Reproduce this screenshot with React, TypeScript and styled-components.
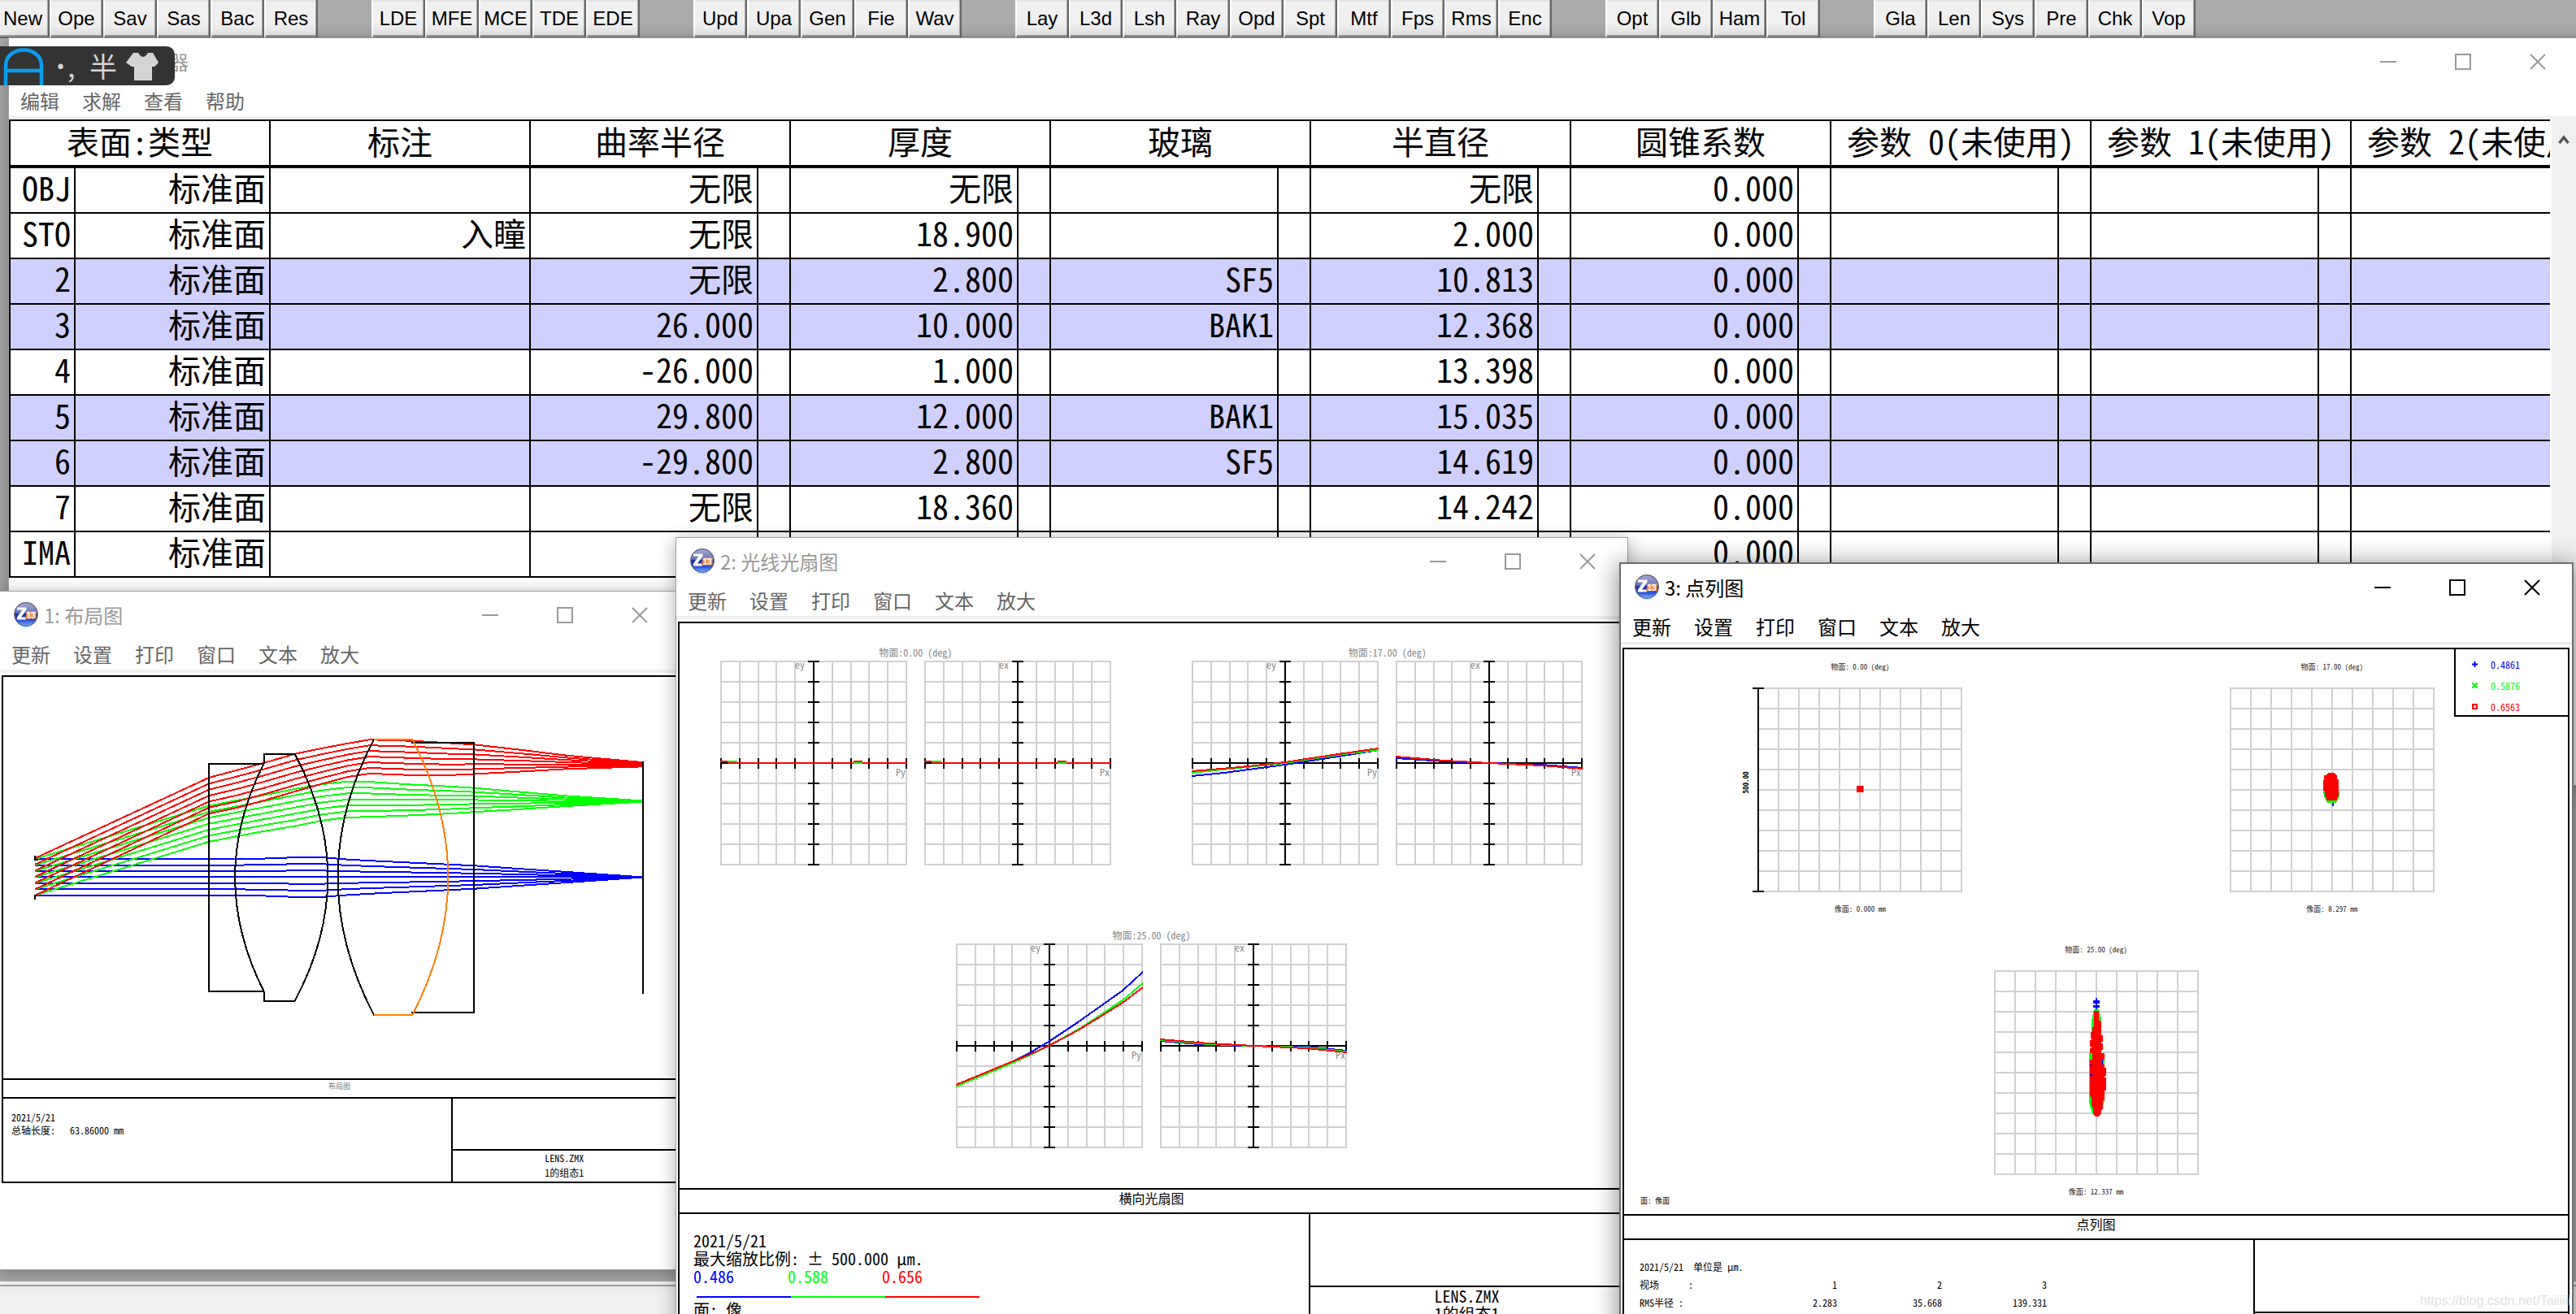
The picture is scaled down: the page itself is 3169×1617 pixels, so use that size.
import React from "react";
import styled, { createGlobalStyle } from "styled-components";

const UI_FONT = '"Noto Sans CJK SC", "Noto Sans", sans-serif';
const GRID_FONT = '"Noto Sans Mono CJK SC", "Noto Sans CJK SC", monospace';

const GlobalStyle = createGlobalStyle`
  *, *::before, *::after { box-sizing: border-box; }
  html, body { margin: 0; padding: 0; overflow: hidden; background: #ababab; }
  button { font: inherit; color: inherit; border: 0; background: none; padding: 0; margin: 0; }
`;

const Desktop = styled.div`
  position: relative;
  display: flex;
  flex-direction: column;
  height: 100vh;
  overflow: hidden;
  background: #ababab;
  font-family: ${UI_FONT};
`;

/* ---------- toolbar ---------- */

const Toolbar = styled.div`
  display: flex;
  flex: none;
  gap: 66px;
  height: 47px;
  margin-left: -5px;
  border-bottom: 2px solid #8a8a8a;
`;

const ToolGroup = styled.div`
  display: flex;
  height: 47px;
`;

const ToolButton = styled.button`
  width: 66px;
  height: 47px;
  background: #f0f0f0;
  border-style: solid;
  border-width: 0 2px 2px 2px;
  border-color: #fff #696969 #696969 #fff;
  box-shadow: inset -1px -2px 0 #a8a8a8, inset 0 2px 0 #e3e3e3;
  font-family: "Liberation Sans", Arial, sans-serif;
  font-size: 24px;
  color: #000;
`;

const Workspace = styled.main`
  flex: 1;
`;

const StatusBar = styled.footer`
  flex: none;
  height: 40px;
  background: #f0f0f0;
  border-top: 4px solid #f8f8f8;
  box-shadow: inset 0 2px 0 #a0a0a0;
`;

/* ---------- windows ---------- */

interface WinProps {
  $active?: boolean;
  $x: number;
  $y: number;
  $z: number;
}

const Win = styled.section<WinProps>`
  position: absolute;
  left: ${(p) => p.$x}px;
  top: ${(p) => p.$y}px;
  z-index: ${(p) => p.$z};
  display: flex;
  flex-direction: column;
  background: #fff;
  color: ${(p) => (p.$active ? "#000" : "#666")};
  box-shadow: ${(p) =>
    p.$active
      ? "0 0 0 2px #6e6e6e, 0 4px 28px 4px rgba(0,0,0,.45)"
      : "0 0 0 1px #a0a0a0, 0 4px 20px 2px rgba(0,0,0,.3)"};
`;

const EditorWin = styled(Win)`
  right: -2px;
  height: 919px;
`;
const LayoutWin = styled(Win)`
  width: 836px;
  height: 834px;
`;
const FanWin = styled(Win)`
  width: 1170px;
  bottom: -50px;
`;
const SpotWin = styled(Win)`
  right: 5px;
  bottom: -50px;
`;

const TitleBar = styled.header<{ $active?: boolean }>`
  display: flex;
  align-items: center;
  flex: none;
  height: 58px;
  padding: 0 3px 0 17px;
  color: ${(p) => (p.$active ? "#000" : "#999")};
`;

const Title = styled.h2`
  flex: 1;
  margin: 0 0 0 7px;
  font-size: 24px;
  line-height: 32px;
  font-weight: 400;
`;

const CtlButton = styled.button`
  display: grid;
  place-items: center;
  width: 92px;
  height: 58px;
`;

const MenuBar = styled.nav`
  display: flex;
  align-items: center;
  flex: none;
  gap: 28px;
  height: 38px;
  padding-left: 14px;
`;

const MenuItem = styled.button`
  font-size: 24px;
  line-height: 32px;
`;

const Rule = styled.div`
  flex: none;
  height: 4px;
  background: #f0f0f0;
`;

function Controls() {
  return (
    <>
      <CtlButton type="button" aria-label="最小化">
        <svg width="20" height="20" viewBox="0 0 20 20"><path d="M0 10H20" stroke="currentColor" strokeWidth="2" /></svg>
      </CtlButton>
      <CtlButton type="button" aria-label="最大化">
        <svg width="20" height="20" viewBox="0 0 20 20"><rect x="1" y="1" width="18" height="18" fill="none" stroke="currentColor" strokeWidth="2" /></svg>
      </CtlButton>
      <CtlButton type="button" aria-label="关闭">
        <svg width="20" height="20" viewBox="0 0 20 20"><path d="M1 1L19 19M19 1L1 19" stroke="currentColor" strokeWidth="2" /></svg>
      </CtlButton>
    </>
  );
}

function Logo({ id }: { id: string }) {
  return (
    <svg width="30" height="32" viewBox="0 0 30 32" aria-hidden="true">
      <defs>
        <linearGradient id={id} x1="0" y1="0" x2="0" y2="1">
          <stop offset="0" stopColor="#a9acd6" />
          <stop offset="0.42" stopColor="#6d74b8" />
          <stop offset="0.5" stopColor="#1c2f9e" />
          <stop offset="0.75" stopColor="#2c50d8" />
          <stop offset="1" stopColor="#7db4ff" />
        </linearGradient>
        <linearGradient id={id + "o"} x1="0" y1="0" x2="0" y2="1">
          <stop offset="0" stopColor="#f9b27a" />
          <stop offset="1" stopColor="#ee6d1c" />
        </linearGradient>
      </defs>
      <ellipse cx="15" cy="30" rx="7" ry="1.5" fill="#bfeaff" />
      <circle cx="15" cy="15" r="14.3" fill={`url(#${id})`} stroke="#5a6078" strokeWidth="1.2" />
      <path d="M4 6.5H15.500V9.500L9 18.500H15V21.500H4V18.500L10.500 9.500H4Z" fill="#fff" />
      <path d="M16 11.500H27.500V20.500H14Z" fill={`url(#${id}o)`} />
      <text x="15.500" y="19.500" fontSize="10" fontWeight="700" fill="#fff" fontFamily="Liberation Sans">13</text>
    </svg>
  );
}

function WindowHead({ id, title, active }: { id: string; title: string; active?: boolean }) {
  return (
    <>
      <TitleBar $active={active}>
        <Logo id={id} />
        <Title>{title}</Title>
        <Controls />
      </TitleBar>
      <MenuBar>
        {["更新", "设置", "打印", "窗口", "文本", "放大"].map((m) => (
          <MenuItem key={m} type="button">{m}</MenuItem>
        ))}
      </MenuBar>
      <Rule />
    </>
  );
}

/* ---------- lens data editor ---------- */

const EditorBody = styled.div`
  display: flex;
  flex: 1;
  min-height: 0;
  background: #f0f0f0;
`;

const SheetArea = styled.div`
  flex: 1;
  min-width: 0;
  overflow: hidden;
  background: #fff;
`;

const ScrollTrack = styled.div`
  flex: none;
  width: 34px;
  padding: 12px 0 0 8px;
  border-left: 2px solid #fff;
  background: #f0f0f0;
`;

const Sheet = styled.table`
  table-layout: fixed;
  width: 3202px;
  border-collapse: separate;
  border-spacing: 0;
  border-left: 2px solid #000;
  font-family: ${GRID_FONT};
  font-size: 40px;
  font-weight: 300;
  line-height: 44px;
  color: #000;
`;

const Th = styled.th`
  height: 60px;
  padding: 0 0 6px;
  border: solid #000;
  border-width: 2px 2px 4px 0;
  font-weight: 300;
  white-space: nowrap;
`;

const Td = styled.td`
  height: 56px;
  padding: 0 4px 8px 0;
  border: solid #000;
  border-width: 0 2px 2px 0;
  text-align: right;
  white-space: nowrap;
`;

const Tr = styled.tr<{ $tint?: boolean }>`
  background: ${(p) => (p.$tint ? "#d0d0ff" : "#fff")};
`;

interface Surface {
  id: string;
  note?: string;
  radius: string;
  thick: string;
  glass?: string;
  semi: string;
}

const surfaces: Surface[] = [
  { id: "OBJ", radius: "无限", thick: "无限", semi: "无限" },
  { id: "STO", note: "入瞳", radius: "无限", thick: "18.900", semi: "2.000" },
  { id: "2", radius: "无限", thick: "2.800", glass: "SF5", semi: "10.813" },
  { id: "3", radius: "26.000", thick: "10.000", glass: "BAK1", semi: "12.368" },
  { id: "4", radius: "-26.000", thick: "1.000", semi: "13.398" },
  { id: "5", radius: "29.800", thick: "12.000", glass: "BAK1", semi: "15.035" },
  { id: "6", radius: "-29.800", thick: "2.800", glass: "SF5", semi: "14.619" },
  { id: "7", radius: "无限", thick: "18.360", semi: "14.242" },
  { id: "IMA", radius: "无限", thick: "", semi: "" },
];

const pairedHeads = ["曲率半径", "厚度", "玻璃", "半直径", "圆锥系数", "参数 0(未使用)", "参数 1(未使用)", "参数 2(未使用)"];

function SurfaceSheet() {
  return (
    <Sheet>
      <colgroup>
        <col style={{ width: 80 }} />
        <col style={{ width: 240 }} />
        <col style={{ width: 320 }} />
        {pairedHeads.map((h) => (
          <React.Fragment key={h}>
            <col style={{ width: 280 }} />
            <col style={{ width: 40 }} />
          </React.Fragment>
        ))}
      </colgroup>
      <thead>
        <tr>
          <Th colSpan={2}>表面:类型</Th>
          <Th>标注</Th>
          {pairedHeads.map((h) => <Th key={h} colSpan={2}>{h}</Th>)}
        </tr>
      </thead>
      <tbody>
        {surfaces.map((s) => (
          <Tr key={s.id} $tint={!!s.glass}>
            <Td>{s.id}</Td>
            <Td>标准面</Td>
            <Td>{s.note}</Td>
            {[s.radius, s.thick, s.glass, s.semi, "0.000", "", "", ""].map((v, i) => (
              <React.Fragment key={i}>
                <Td>{v}</Td>
                <Td />
              </React.Fragment>
            ))}
          </Tr>
        ))}
      </tbody>
    </Sheet>
  );
}

const EditorTitle = styled(Title)`
  margin-left: 180px;
`;

const ImeBadge = styled.aside`
  position: absolute;
  left: 0;
  top: 57px;
  z-index: 2;
  display: flex;
  align-items: center;
  width: 215px;
  height: 48px;
  border-radius: 0 10px 10px 0;
  background: #333;
  color: #d4d4d4;
  font-size: 34px;
  line-height: 48px;
`;

const ImeMode = styled.span`
  width: 44px;
  margin-left: 8px;
`;

const ImeWidth = styled.span`
  width: 44px;
`;

/* ---------- plot frames ---------- */

const Frame = styled.div`
  display: flex;
  flex-direction: column;
  flex: none;
  margin: 3px 3px 0 2px;
  border: 2px solid #000;
  color: #000;
  font-family: ${GRID_FONT};
`;

const FrameTitle = styled.div<{ $small?: boolean }>`
  flex: none;
  height: ${(p) => (p.$small ? 25 : 32)}px;
  border: solid #000;
  border-width: 2px 0;
  text-align: center;
  font-size: ${(p) => (p.$small ? 9 : 16)}px;
  line-height: ${(p) => (p.$small ? 15 : 20)}px;
  color: ${(p) => (p.$small ? "#777" : "#000")};
`;

const FrameFoot = styled.div<{ $h: number }>`
  display: grid;
  grid-template-columns: 2fr 1fr;
  height: ${(p) => p.$h}px;
  overflow: hidden;
`;

const Notes = styled.div<{ $size: number; $line: number; $top: number; $left: number }>`
  padding: ${(p) => p.$top}px 0 0 ${(p) => p.$left}px;
  font-size: ${(p) => p.$size}px;
  line-height: ${(p) => p.$line}px;
  white-space: pre;
  overflow: hidden;
`;

const FileCol = styled.div<{ $split: number; $size: number; $line: number }>`
  display: grid;
  grid-template-rows: ${(p) => p.$split}px 1fr;
  border-left: 2px solid #000;
  font-size: ${(p) => p.$size}px;
  line-height: ${(p) => p.$line}px;
  text-align: center;
`;

const FileName = styled.div`
  border-top: 2px solid #000;
`;

/* ---------- layout drawing ---------- */

type Pt = [number, number];

const LAYOUT_SVG_LINE = { vectorEffect: "non-scaling-stroke" as const, fill: "none", strokeWidth: 2 };

function fan(top: Pt[], bottom: Pt[], n: number): string[] {
  return Array.from({ length: n }, (_, i) => {
    const t = i / (n - 1);
    return top.map(([x, y], k) => `${x},${(y + (bottom[k][1] - y) * t).toFixed(1)}`).join(" ");
  });
}

const xs = [82, 481, 545, 605, 680, 740, 800, 850, 950, 1030, 1090, 1200, 1300, 1478];
const zip = (ys: number[]): Pt[] => xs.map((x, i) => [x, ys[i]]);

const blueRays = fan(
  zip([467, 467, 467, 466, 463, 463, 468, 471, 476, 480, 483, 491, 498, 511]),
  zip([555, 555, 555, 556, 559, 559, 554, 551, 546, 542, 539, 531, 524, 511]),
  7
);
const greenRays = fan(
  zip([467, 338, 325, 313, 297, 286, 279, 280, 287, 291, 295, 305, 314, 326]),
  zip([555, 425, 412, 400, 387, 374, 366, 365, 361, 357, 353, 346, 339, 328]),
  7
);
const redRays = fan(
  zip([465, 270, 252, 235, 212, 199, 187, 178, 181, 186, 190, 203, 216, 233]),
  zip([555, 357, 343, 326, 303, 285, 268, 260, 264, 264, 261, 255, 249, 243]),
  7
);

const Canvas = styled.svg`
  display: block;
  width: 100%;
  height: 494px;
`;

function LayoutDrawing() {
  return (
    <Canvas viewBox="9 26 1543 972" preserveAspectRatio="none" shapeRendering="crispEdges" role="img" aria-label="布局图">
      {([["#00f", blueRays], ["#0f0", greenRays], ["#f00", redRays]] as [string, string[]][]).map(([c, rays]) =>
        rays.map((p, i) => <polyline key={c + i} points={p} stroke={c} {...LAYOUT_SVG_LINE} />)
      )}
      <g stroke="#000">
        <path d="M607 236H481V787H607" {...LAYOUT_SVG_LINE} />
        <path d="M607 236V212H678Q830 511 678 811H607V787Q475 511 607 236" {...LAYOUT_SVG_LINE} />
        <path d="M860 177Q694 511 860 845" {...LAYOUT_SVG_LINE} />
        <path d="M946 185H1090V838H946" {...LAYOUT_SVG_LINE} />
        <path d="M1478 230V793" {...LAYOUT_SVG_LINE} />
        <path d="M82 458V468H90M82 565V555H90" {...LAYOUT_SVG_LINE} />
      </g>
      <path d="M860 177H948Q1112 511 948 845H860" stroke="#ff8000" {...LAYOUT_SVG_LINE} />
    </Canvas>
  );
}

/* ---------- grids ---------- */

const GRID_W = 230;
const GRID_H = 252;

function Grid({ w, h }: { w: number; h: number }) {
  const d: string[] = [];
  for (let i = 0; i <= 10; i++) {
    const x = 1 + Math.round(((w - 2) * i) / 10);
    const y = 1 + Math.round(((h - 2) * i) / 10);
    d.push(`M${x} 0V${h}M0 ${y}H${w}`);
  }
  return <path d={d.join("")} stroke="#d0d0d0" strokeWidth="2" fill="none" />;
}

const PlotSvg = styled.svg`
  display: block;
  overflow: visible;
  font-family: ${GRID_FONT};
`;

interface Curve {
  c: string;
  p: string;
}

function FanPlot({ axis, curves }: { axis: "y" | "x"; curves: Curve[] }) {
  const ticks: string[] = [];
  for (let i = 0; i <= 10; i++) {
    const x = 1 + Math.round(((GRID_W - 2) * i) / 10);
    const y = 1 + Math.round(((GRID_H - 2) * i) / 10);
    ticks.push(`M${x} 120V133M108 ${y}H122`);
  }
  return (
    <PlotSvg width={GRID_W} height={GRID_H} shapeRendering="crispEdges">
      <Grid w={GRID_W} h={GRID_H} />
      <path d={`M115 0V252M0 126H230${ticks.join("")}`} stroke="#000" strokeWidth="2" fill="none" />
      <text x="92" y="10" fontSize="12" fill="#888">e{axis}</text>
      <text x="216" y="142" fontSize="12" fill="#888">P{axis}</text>
      {curves.map((k, i) => (
        <polyline key={i} points={k.p} stroke={k.c} strokeWidth="2" fill="none" />
      ))}
    </PlotSvg>
  );
}

const B = "#00f";
const G = "#0f0";
const R = "#f00";

const flat: Curve[] = [
  { c: R, p: "0,124 9,124" },
  { c: G, p: "9,124 21,124" },
  { c: R, p: "9,126 230,126" },
  { c: R, p: "164,124 175,124" },
  { c: G, p: "164,126 175,126" },
];

const fans = [
  { label: "物面:0.00 (deg)", y: flat, x: flat },
  {
    label: "物面:17.00 (deg)",
    y: [
      { c: B, p: "0,142 40,138 115,128 180,118 230,110" },
      { c: G, p: "0,138 115,126 180,116 230,110" },
      { c: R, p: "0,136 60,131 115,125 180,115 230,108" },
    ],
    x: [
      { c: B, p: "0,120 60,124 115,126 180,128 230,132" },
      { c: R, p: "0,118 60,123 115,126 180,129 230,133" },
    ],
  },
  {
    label: "物面:25.00 (deg)",
    y: [
      { c: B, p: "0,176 66,147 90,135 114,121 150,97 181,75 205,58 230,35" },
      { c: G, p: "0,176 58,152 90,138 114,126 150,106 181,86 205,70 230,49" },
      { c: R, p: "0,174 58,150 90,137 114,126 150,107 181,88 205,73 230,54" },
    ],
    x: [
      { c: B, p: "0,120 60,125 115,126 180,127 230,132" },
      { c: G, p: "0,119 60,124 115,126 180,128 230,133" },
      { c: R, p: "0,118 60,123 115,126 180,129 230,134" },
    ],
  },
];

const FanArea = styled.div`
  display: flex;
  flex-wrap: wrap;
  justify-content: space-around;
  align-content: flex-start;
  row-gap: 78px;
  flex: none;
  height: 695px;
  padding-top: 28px;
`;

const FanFigure = styled.figure`
  margin: 0;
`;

const FanCaption = styled.figcaption`
  height: 18px;
  text-align: center;
  font-size: 12px;
  line-height: 16px;
  color: #888;
`;

const Pair = styled.div`
  display: flex;
  gap: 21px;
`;

const Wave = styled.div`
  display: flex;
  margin-bottom: 13px;
`;

const WaveCell = styled.span<{ $c: string }>`
  width: 116px;
  color: ${(p) => p.$c};
`;

const WaveLine = styled.div`
  display: flex;
  height: 2px;
  margin: 0 0 4px 4px;
`;

const WaveStroke = styled.span<{ $c: string }>`
  width: 116px;
  background: ${(p) => p.$c};
`;

/* ---------- spot diagram ---------- */

const SpotArea = styled.div`
  position: relative;
  display: flex;
  flex-wrap: wrap;
  justify-content: space-around;
  align-content: flex-start;
  row-gap: 12px;
  flex: none;
  height: 695px;
  padding-top: 5px;
`;

const SpotFigure = styled.figure`
  margin: 0 100px;
  width: 252px;
`;

const SpotCaption = styled.figcaption`
  height: 42px;
  text-align: center;
  font-size: 9px;
  line-height: 34px;
  color: #222;
`;

const ImageLabel = styled.div`
  height: 42px;
  text-align: center;
  font-size: 9px;
  line-height: 42px;
  color: #222;
`;

const SurfaceLabel = styled.div`
  position: absolute;
  left: 20px;
  bottom: 6px;
  font-size: 9px;
  line-height: 20px;
`;

const Legend = styled.ul`
  position: absolute;
  top: -2px;
  right: -2px;
  width: 142px;
  height: 85px;
  margin: 0;
  padding: 5px 0 0 20px;
  list-style: none;
  background: #fff;
  border: 2px solid #000;
`;

const LegendItem = styled.li<{ $c: string }>`
  display: flex;
  align-items: center;
  gap: 16px;
  height: 26px;
  font-size: 12px;
  color: ${(p) => p.$c};
`;

function SpotScale() {
  return (
    <>
      <path d="M1 0V252M-6 1H8M-6 251H8" stroke="#000" strokeWidth="2" fill="none" />
      <text transform="rotate(-90)" x="-117" y="-11" fontSize="9" fontWeight="700" textAnchor="middle">500.00</text>
    </>
  );
}

const SPOTS: { top: string; bottom: string; mark: React.ReactNode }[] = [
  {
    top: "物面: 0.00 (deg)",
    bottom: "像面: 0.000 mm",
    mark: (
      <>
        <path d="M129 121h2v8h-2z" fill={G} />
        <path d="M122 121h8v8h-8z" fill={R} />
        <SpotScale />
      </>
    ),
  },
  {
    top: "物面: 17.00 (deg)",
    bottom: "像面: 8.297 mm",
    mark: (
      <>
        <path d="M117 132h18l-4 10h-3v4h-2v-4h-4z" fill={B} />
        <path d="M115 128h20v6l-4 8h-11l-4-8z" fill={G} />
        <path d="M121 105h8l3 4v4h2v20l-2 4v2h-13v-3l-2-3v-4l-2-2v-13h1v-6h3z" fill={R} />
      </>
    ),
  },
  {
    top: "物面: 25.00 (deg)",
    bottom: "像面: 12.337 mm",
    mark: (
      <>
        <path d="M125 34h2v3h3v4h-3v2h3v3h-3v7h-2v-7h-3v-3h3v-2h-3v-4h3z" fill={B} />
        <path d="M123 48h6l3 12v44h4v56l-4 14-4 6h-4l-4-6-3-12v-60h3V62z" fill={G} />
        <path d="M118 110h16v22h-16z" fill={B} />
        <path d="M123 50h6v12h3v18h2v8h-2v2h2v8h-2v4h4v8h-3v6h3v4h2v10h-2v2h2v16h-2v12h-2v10l-2 2v4l-3 4h-4l-3-4v-6l-2-4v-8l-2-4v-24h3v-2h-3v-10h2v-2h-2v-6h3v-8h-3v-6h2v-2h-2v-8h2v-2h-1v-8h2V70h2V56z" fill={R} />
      </>
    ),
  },
];

const Stats = styled.table`
  border-collapse: collapse;
  font: inherit;
  line-height: 22px;

  td, th {
    width: 129px;
    padding: 0;
    font-weight: 400;
    text-align: right;
  }
  th {
    width: 114px;
    text-align: left;
  }
`;

const Watermark = styled.div`
  position: absolute;
  right: 0;
  bottom: 4px;
  z-index: 20;
  width: 192px;
  overflow: hidden;
  white-space: nowrap;
  font-family: "Liberation Sans", Arial, sans-serif;
  font-size: 16px;
  line-height: 24px;
  color: #e2e2e2;
`;

const toolGroups = [
  ["New", "Ope", "Sav", "Sas", "Bac", "Res"],
  ["LDE", "MFE", "MCE", "TDE", "EDE"],
  ["Upd", "Upa", "Gen", "Fie", "Wav"],
  ["Lay", "L3d", "Lsh", "Ray", "Opd", "Spt", "Mtf", "Fps", "Rms", "Enc"],
  ["Opt", "Glb", "Ham", "Tol"],
  ["Gla", "Len", "Sys", "Pre", "Chk", "Vop"],
];

export default function App() {
  return (
    <Desktop>
      <GlobalStyle />
      <Toolbar>
        {toolGroups.map((g) => (
          <ToolGroup key={g[0]}>
            {g.map((b) => <ToolButton key={b} type="button">{b}</ToolButton>)}
          </ToolGroup>
        ))}
      </Toolbar>
      <Workspace />
      <StatusBar />

      <EditorWin $x={11} $y={47} $z={1}>
        <TitleBar>
          <EditorTitle>器</EditorTitle>
          <Controls />
        </TitleBar>
        <MenuBar>
          {["编辑", "求解", "查看", "帮助"].map((m) => <MenuItem key={m} type="button">{m}</MenuItem>)}
        </MenuBar>
        <Rule />
        <EditorBody>
          <SheetArea><SurfaceSheet /></SheetArea>
          <ScrollTrack>
            <svg width="14" height="12" viewBox="0 0 14 12"><path d="M1.500 10L7 3L12.500 10" fill="none" stroke="#555" strokeWidth="3.500" /></svg>
          </ScrollTrack>
        </EditorBody>
      </EditorWin>

      <ImeBadge>
        <svg width="58" height="48" viewBox="0 0 58 48" aria-hidden="true">
          <path d="M7 48V24C7 -2 51 -2 51 24V48M7 30H51" fill="none" stroke="#0a9cec" strokeWidth="4.500" />
        </svg>
        <ImeMode>˙,</ImeMode>
        <ImeWidth>半</ImeWidth>
        <svg width="50" height="48" viewBox="4 0 50 48" aria-hidden="true">
          <path d="M14 8H20Q26 18 32 8H38L45 20L40 25H37V42H15V25H12L5 20Z" fill="#d4d4d4" />
        </svg>
      </ImeBadge>

      <LayoutWin $x={0} $y={728} $z={3}>
        <WindowHead id="l1" title="1: 布局图" />
        <Frame>
          <LayoutDrawing />
          <FrameTitle $small>布局图</FrameTitle>
          <FrameFoot $h={102}>
            <Notes $size={12} $line={16} $top={15} $left={10}>{"2021/5/21\n总轴长度:   63.86000 mm"}</Notes>
            <FileCol $split={62} $size={12} $line={18}>
              <div />
              <FileName>LENS.ZMX<br />1的组态1</FileName>
            </FileCol>
          </FrameFoot>
        </Frame>
      </LayoutWin>

      <FanWin $x={832} $y={662} $z={4}>
        <WindowHead id="l2" title="2: 光线光扇图" />
        <Frame>
          <FanArea>
            {fans.map((f) => (
              <FanFigure key={f.label}>
                <FanCaption>{f.label}</FanCaption>
                <Pair>
                  <FanPlot axis="y" curves={f.y} />
                  <FanPlot axis="x" curves={f.x} />
                </Pair>
              </FanFigure>
            ))}
          </FanArea>
          <FrameTitle>横向光扇图</FrameTitle>
          <FrameFoot $h={180}>
            <Notes $size={20} $line={22} $top={22} $left={17}>
              {"2021/5/21\n最大缩放比例: ± 500.000 µm."}
              <Wave>
                <WaveCell $c={B}>0.486</WaveCell>
                <WaveCell $c={G}>0.588</WaveCell>
                <WaveCell $c={R}>0.656</WaveCell>
              </Wave>
              <WaveLine>
                <WaveStroke $c={B} />
                <WaveStroke $c={G} />
                <WaveStroke $c={R} />
              </WaveLine>
              {"面: 像"}
            </Notes>
            <FileCol $split={88} $size={20} $line={22}>
              <div />
              <FileName>LENS.ZMX<br />1的组态1</FileName>
            </FileCol>
          </FrameFoot>
        </Frame>
      </FanWin>

      <SpotWin $active $x={1994} $y={694} $z={5}>
        <WindowHead id="l3" title="3: 点列图" active />
        <Frame>
          <SpotArea>
            {SPOTS.map((s) => (
              <SpotFigure key={s.top}>
                <SpotCaption>{s.top}</SpotCaption>
                <PlotSvg width={252} height={252} shapeRendering="crispEdges">
                  <Grid w={252} h={252} />
                  {s.mark}
                </PlotSvg>
                <ImageLabel>{s.bottom}</ImageLabel>
              </SpotFigure>
            ))}
            <SurfaceLabel>面: 像面</SurfaceLabel>
            <Legend>
              <LegendItem $c={B}>
                <svg width="7" height="7"><path d="M0 3.500H7M3.500 0V7" stroke={B} strokeWidth="2" /></svg>
                0.4861
              </LegendItem>
              <LegendItem $c={G}>
                <svg width="7" height="7"><path d="M0 0L7 7M7 0L0 7" stroke={G} strokeWidth="2" /></svg>
                0.5876
              </LegendItem>
              <LegendItem $c={R}>
                <svg width="7" height="7"><rect x="1" y="1" width="5" height="5" fill="none" stroke={R} strokeWidth="2" /></svg>
                0.6563
              </LegendItem>
            </Legend>
          </SpotArea>
          <FrameTitle>点列图</FrameTitle>
          <FrameFoot $h={180}>
            <Notes $size={12} $line={22} $top={22} $left={19}>
              {"2021/5/21  单位是 µm."}
              <Stats>
                <tbody>
                  <tr><th>视场      :</th><td>1</td><td>2</td><td>3</td></tr>
                  <tr><th>RMS半径 :</th><td>2.283</td><td>35.668</td><td>139.331</td></tr>
                  <tr><th>GEO半径 :</th><td>3.893</td><td>68.936</td><td>358.861</td></tr>
                </tbody>
              </Stats>
            </Notes>
            <FileCol $split={88} $size={20} $line={22}>
              <div />
              <FileName />
            </FileCol>
          </FrameFoot>
        </Frame>
      </SpotWin>

      <Watermark>https://blog.csdn.net/Taiiiiii</Watermark>
    </Desktop>
  );
}
